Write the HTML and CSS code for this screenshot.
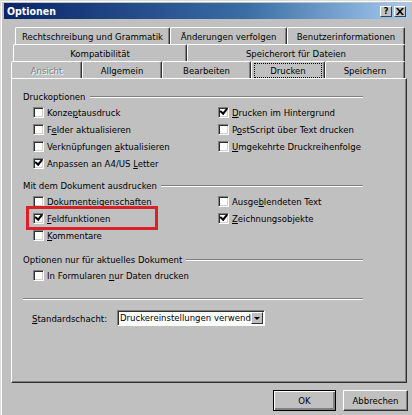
FILE: index.html
```html
<!DOCTYPE html>
<html lang="de">
<head>
  <meta charset="UTF-8">
  <title>Optionen</title>
  <link rel="stylesheet" href="styles.css">
</head>
<body>
  <div class="window">
    <div class="titlebar">
      <span class="title">Optionen</span>
      <div class="title-buttons">
        <span class="cap-btn">?</span>
        <span class="cap-btn close">
          <svg width="8" height="7" viewBox="0 0 8 7"><path d="M0 0h2l2 2.2L6 0h2L5 3.5 8 7H6L4 4.8 2 7H0l3-3.5z" fill="#000"/></svg>
        </span>
      </div>
    </div>

    <div class="tabs">
      <div class="tab-row row1">
        <div class="tab w155">Rechtschreibung und Grammatik</div>
        <div class="tab w117">Änderungen verfolgen</div>
        <div class="tab w118">Benutzerinformationen</div>
      </div>
      <div class="tab-row row2">
        <div class="tab w174">Kompatibilität</div>
        <div class="tab w218">Speicherort für Dateien</div>
      </div>
      <div class="tab-row row3">
        <div class="tab w71 disabled">Ansicht</div>
        <div class="tab w80">Allgemein</div>
        <div class="tab w89">Bearbeiten</div>
        <div class="tab w74 active"><span class="focus">Drucken</span></div>
        <div class="tab w80">Speichern</div>
      </div>
    </div>

    <div class="panel">
      <div class="group">
        <div class="group-title"><span>Druckoptionen</span><i class="rule"></i></div>
        <div class="opts">
          <label class="opt"><span class="cb"></span><span>Konze<u>p</u>tausdruck</span></label>
          <label class="opt"><span class="cb on"></span><span><u>D</u>rucken im Hintergrund</span></label>
          <label class="opt"><span class="cb"></span><span>F<u>e</u>lder aktualisieren</span></label>
          <label class="opt"><span class="cb"></span><span>P<u>o</u>stScript über Text drucken</span></label>
          <label class="opt"><span class="cb"></span><span>Verknüpfungen <u>a</u>ktualisieren</span></label>
          <label class="opt"><span class="cb"></span><span><u>U</u>mgekehrte Druckreihenfolge</span></label>
          <label class="opt"><span class="cb on"></span><span>Anpassen an A4/US <u>L</u>etter</span></label>
        </div>
      </div>

      <div class="group g2">
        <div class="group-title"><span>Mit dem Dokument ausdrucken</span><i class="rule"></i></div>
        <div class="opts">
          <label class="opt"><span class="cb"></span><span>Doku<u>m</u>enteigenschaften</span></label>
          <label class="opt"><span class="cb"></span><span>Ausge<u>b</u>lendeten Text</span></label>
          <label class="opt"><span class="cb on"></span><span><u>F</u>eldfunktionen</span></label>
          <label class="opt"><span class="cb on"></span><span><u>Z</u>eichnungsobjekte</span></label>
          <label class="opt"><span class="cb"></span><span><u>K</u>ommentare</span></label>
        </div>
      </div>

      <div class="group g3">
        <div class="group-title"><span>Optionen nur für aktuelles Dokument</span><i class="rule"></i></div>
        <div class="opts">
          <label class="opt"><span class="cb"></span><span>In Formularen <u>n</u>ur Daten drucken</span></label>
        </div>
      </div>

      <div class="separator"></div>

      <div class="tray-row">
        <span class="tray-label"><u>S</u>tandardschacht:</span>
        <div class="select">
          <span class="select-text">Druckereinstellungen verwenden</span>
          <span class="select-btn"><i class="arrow"></i></span>
        </div>
      </div>

      <!-- red annotation around Feldfunktionen -->
      <div class="highlight"></div>
    </div>

    <div class="buttons">
      <button class="btn default">OK</button>
      <button class="btn">Abbrechen</button>
    </div>
  </div>
</body>
</html>
```

FILE: styles.css
```css
body {
    margin: 0;
    width: 412px;
    height: 415px;
    overflow: hidden;
    background: #c0c0c0;
    font-family: "DejaVu Sans Condensed", "DejaVu Sans", sans-serif;
    font-stretch: condensed;
    font-size: 9.5px;
    color: #000;
}
.window {
    box-sizing: border-box;
    height: 415px;
    padding: 2px 3px 0 3px;
    border-left: 1px solid #dcdcdc;
    border-top: 1px solid #dcdcdc;
    box-shadow: inset 1px 1px #fff;
    background: #c0c0c0;
}
.titlebar {
    height: 16px;
    display: flex;
    align-items: center;
    justify-content: space-between;
    padding: 0 3px 0 3px;
    background: linear-gradient(to right, #0a246a, #3a6ea5 60%, #a6caf0);
}
.title {
    color: #fff;
    font-weight: bold;
    font-size: 10.5px;
}
.title-buttons {
    display: flex;
    gap: 2px;
}
.cap-btn {
    box-sizing: border-box;
    width: 12px;
    height: 11px;
    background: #c0c0c0;
    border: 1px solid;
    border-color: #fff #404040 #404040 #fff;
    display: flex;
    align-items: center;
    justify-content: center;
    font-weight: bold;
    font-size: 9px;
    line-height: 1;
}
.tabs {
    margin-top: 8px;
}
.tab-row {
    display: flex;
    height: 17px;
}
.row1 { margin-left: 11px; }
.row2 { margin-left: 9px; }
.row3 { margin-left: 7px; }
.tab {
    box-sizing: border-box;
    height: 17px;
    display: flex;
    align-items: center;
    justify-content: center;
    border-top: 1px solid #fff;
    border-left: 1px solid #fff;
    border-right: 1px solid #303030;
    box-shadow: inset -1px 0 #808080;
    border-radius: 2px 2px 0 0;
    white-space: nowrap;
}
.w71 { width: 71px; }
.w74 { width: 74px; }
.w80 { width: 80px; }
.w89 { width: 89px; }
.w117 { width: 117px; }
.w118 { width: 118px; }
.w155 { width: 155px; }
.w174 { width: 174px; }
.w218 { width: 218px; }
.tab.disabled {
    color: #808080;
    text-shadow: 1px 1px #fff;
}
.tab.active {
    padding: 1px 2px 0 2px;
}
.focus {
    box-sizing: border-box;
    flex: 1;
    height: 15px;
    border: 1px dotted #000;
    display: flex;
    align-items: center;
    justify-content: center;
}
.panel {
    position: relative;
    box-sizing: border-box;
    height: 305px;
    margin: 0 2px 0 7px;
    border: 1px solid;
    border-color: #fff #303030 #303030 #fff;
    box-shadow: inset -1px -1px #808080;
    padding: 10px 0 0 11px;
}
.group {
    width: 340px;
}
.g2 { margin-top: 6px; }
.g3 { margin-top: 8px; }
.group-title {
    height: 15px;
    display: flex;
    align-items: center;
    gap: 4px;
}
.rule {
    flex: 1;
    height: 0;
    border-top: 1px solid #808080;
    border-bottom: 1px solid #fff;
}
.opts {
    display: grid;
    grid-template-columns: 185px 1fr;
    padding-left: 10px;
}
.opt {
    height: 17px;
    display: flex;
    align-items: center;
    gap: 3px;
    white-space: nowrap;
}
.cb {
    box-sizing: border-box;
    width: 11px;
    height: 11px;
    background: #fff;
    border: 1px solid;
    border-color: #808080 #fff #fff #808080;
    box-shadow: inset 1px 1px #303030, inset -1px -1px #d4d0c8;
    position: relative;
}
.cb.on::after {
    content: "";
    position: absolute;
    left: 2px;
    top: 1px;
    width: 5px;
    height: 3px;
    border-left: 2px solid #000;
    border-bottom: 2px solid #000;
    transform: rotate(-50deg);
    transform-origin: 30% 60%;
}
.separator {
    width: 340px;
    margin-top: 14px;
    border-top: 1px solid #808080;
    border-bottom: 1px solid #fff;
}
.tray-row {
    display: flex;
    align-items: center;
    margin-top: 10px;
    padding-left: 9px;
    height: 16px;
}
.tray-label {
    width: 85px;
}
.select {
    box-sizing: border-box;
    width: 148px;
    height: 16px;
    display: flex;
    background: #fff;
    border: 1px solid;
    border-color: #808080 #fff #fff #808080;
    box-shadow: inset 1px 1px #303030;
    padding: 1px 1px 1px 2px;
}
.select-text {
    flex: 1;
    overflow: hidden;
    white-space: nowrap;
    line-height: 12px;
}
.select-btn {
    box-sizing: border-box;
    width: 12px;
    height: 12px;
    background: #c0c0c0;
    border: 1px solid;
    border-color: #fff #303030 #303030 #fff;
    display: flex;
    align-items: center;
    justify-content: center;
}
.arrow {
    width: 0;
    height: 0;
    border-left: 3px solid transparent;
    border-right: 3px solid transparent;
    border-top: 3px solid #000;
}
.highlight {
    position: absolute;
    left: 14px;
    top: 127px;
    width: 132px;
    height: 24px;
    box-sizing: border-box;
    border: 3px solid #d82228;
}
.buttons {
    display: flex;
    justify-content: flex-end;
    gap: 7px;
    margin: 7px 1px 0 0;
}
.btn {
    box-sizing: border-box;
    height: 21px;
    width: 65px;
    background: #c0c0c0;
    font: inherit;
    border: 1px solid;
    border-color: #fff #303030 #303030 #fff;
    box-shadow: inset -1px -1px #808080;
    padding: 0;
}
.btn.default {
    width: 63px;
    border: 1px solid #000;
    box-shadow: inset 1px 1px #fff, inset -2px -2px #808080;
}
```
